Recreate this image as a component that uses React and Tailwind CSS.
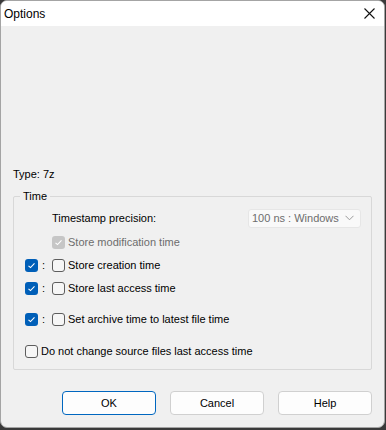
import React from "react";

const font = { fontFamily: '"Liberation Sans", Arial, sans-serif' };

function Check({ kind }) {
  if (kind === "blue" || kind === "disabled") {
    return (
      <span
        className={
          "flex h-[13px] w-[13px] shrink-0 items-center justify-center rounded-[3px] " +
          (kind === "blue" ? "bg-[#005fb8]" : "bg-[#c6c6c6]")
        }
      >
        <svg width="9" height="9" viewBox="0 0 9 9">
          <path d="M1.5 4.8 L3.5 6.6 L7.5 2.4" fill="none" stroke="#fff" strokeWidth="1.1" />
        </svg>
      </span>
    );
  }
  return <span className="h-[13px] w-[13px] shrink-0 rounded-[3px] border border-[#5d5d5d] bg-[#f6f6f6]" />;
}

function Row({ label, className = "" }) {
  return (
    <div className={"flex h-[16px] items-center pl-[11px] " + className}>
      <Check kind="blue" />
      <span className="ml-[4px] w-[10px] leading-none">:</span>
      <Check />
      <span className="ml-[3px] leading-none">{label}</span>
    </div>
  );
}

export default function App() {
  return (
    <div className="h-[430px] w-[386px] bg-[#3a3a3a]" style={font}>
      <div className="flex h-[428px] w-[385px] flex-col overflow-hidden rounded-[7px] border border-[#a4a4a4] bg-[#f0f0f0] text-[11px] text-black">
        <div className="flex h-[25px] shrink-0 items-center justify-between bg-white pl-[3px] pr-[9px]">
          <span className="text-[12px]">Options</span>
          <svg width="11" height="11" viewBox="0 0 11 11">
            <path d="M0.5 0.5 L10.5 10.5 M10.5 0.5 L0.5 10.5" stroke="#111" strokeWidth="1.1" />
          </svg>
        </div>
        <div className="flex flex-1 flex-col px-[12px]">
          <div className="mt-[141px] h-[14px] leading-[14px]">Type: 7z</div>
          <div className="relative mt-[15px] h-[174px] rounded-[2px] border border-[#d8d8d8] pt-[13px]">
            <span className="absolute left-[6px] top-[-8px] bg-[#f0f0f0] px-[3px] leading-[14px]">Time</span>
            <div className="flex h-[16px] items-center justify-between pr-[10px]">
              <span className="ml-[38px] leading-none">Timestamp precision:</span>
              <div className="flex h-[19px] w-[113px] items-center justify-between rounded-[3px] border border-[#e6e6e6] bg-[#f9f9f9] pl-[3px] pr-[6px] text-[#6d6d6d]">
                <span>100 ns : Windows</span>
                <svg width="9" height="6" viewBox="0 0 9 6">
                  <path d="M0.5 0.8 L4.5 4.8 L8.5 0.8" fill="none" stroke="#9a9a9a" strokeWidth="1" />
                </svg>
              </div>
            </div>
            <div className="mt-[8px] flex h-[16px] items-center pl-[38px]">
              <Check kind="disabled" />
              <span className="ml-[3px] leading-none text-[#6d6d6d]">Store modification time</span>
            </div>
            <Row label="Store creation time" className="mt-[7px]" />
            <Row label="Store last access time" className="mt-[7px]" />
            <Row label="Set archive time to latest file time" className="mt-[15px]" />
            <div className="mt-[16px] flex h-[16px] items-center pl-[11px]">
              <Check />
              <span className="ml-[3px] leading-none">Do not change source files last access time</span>
            </div>
          </div>
          <div className="mt-[21px] flex gap-[14px] pl-[49px]">
            <button className="h-[24px] w-[94px] rounded-[4px] border border-[#0067c0] bg-[#fdfdfd] text-[11px]">OK</button>
            <button className="h-[24px] w-[94px] rounded-[4px] border border-[#d0d0d0] bg-[#fdfdfd] text-[11px]">Cancel</button>
            <button className="h-[24px] w-[94px] rounded-[4px] border border-[#d0d0d0] bg-[#fdfdfd] text-[11px]">Help</button>
          </div>
        </div>
      </div>
    </div>
  );
}
